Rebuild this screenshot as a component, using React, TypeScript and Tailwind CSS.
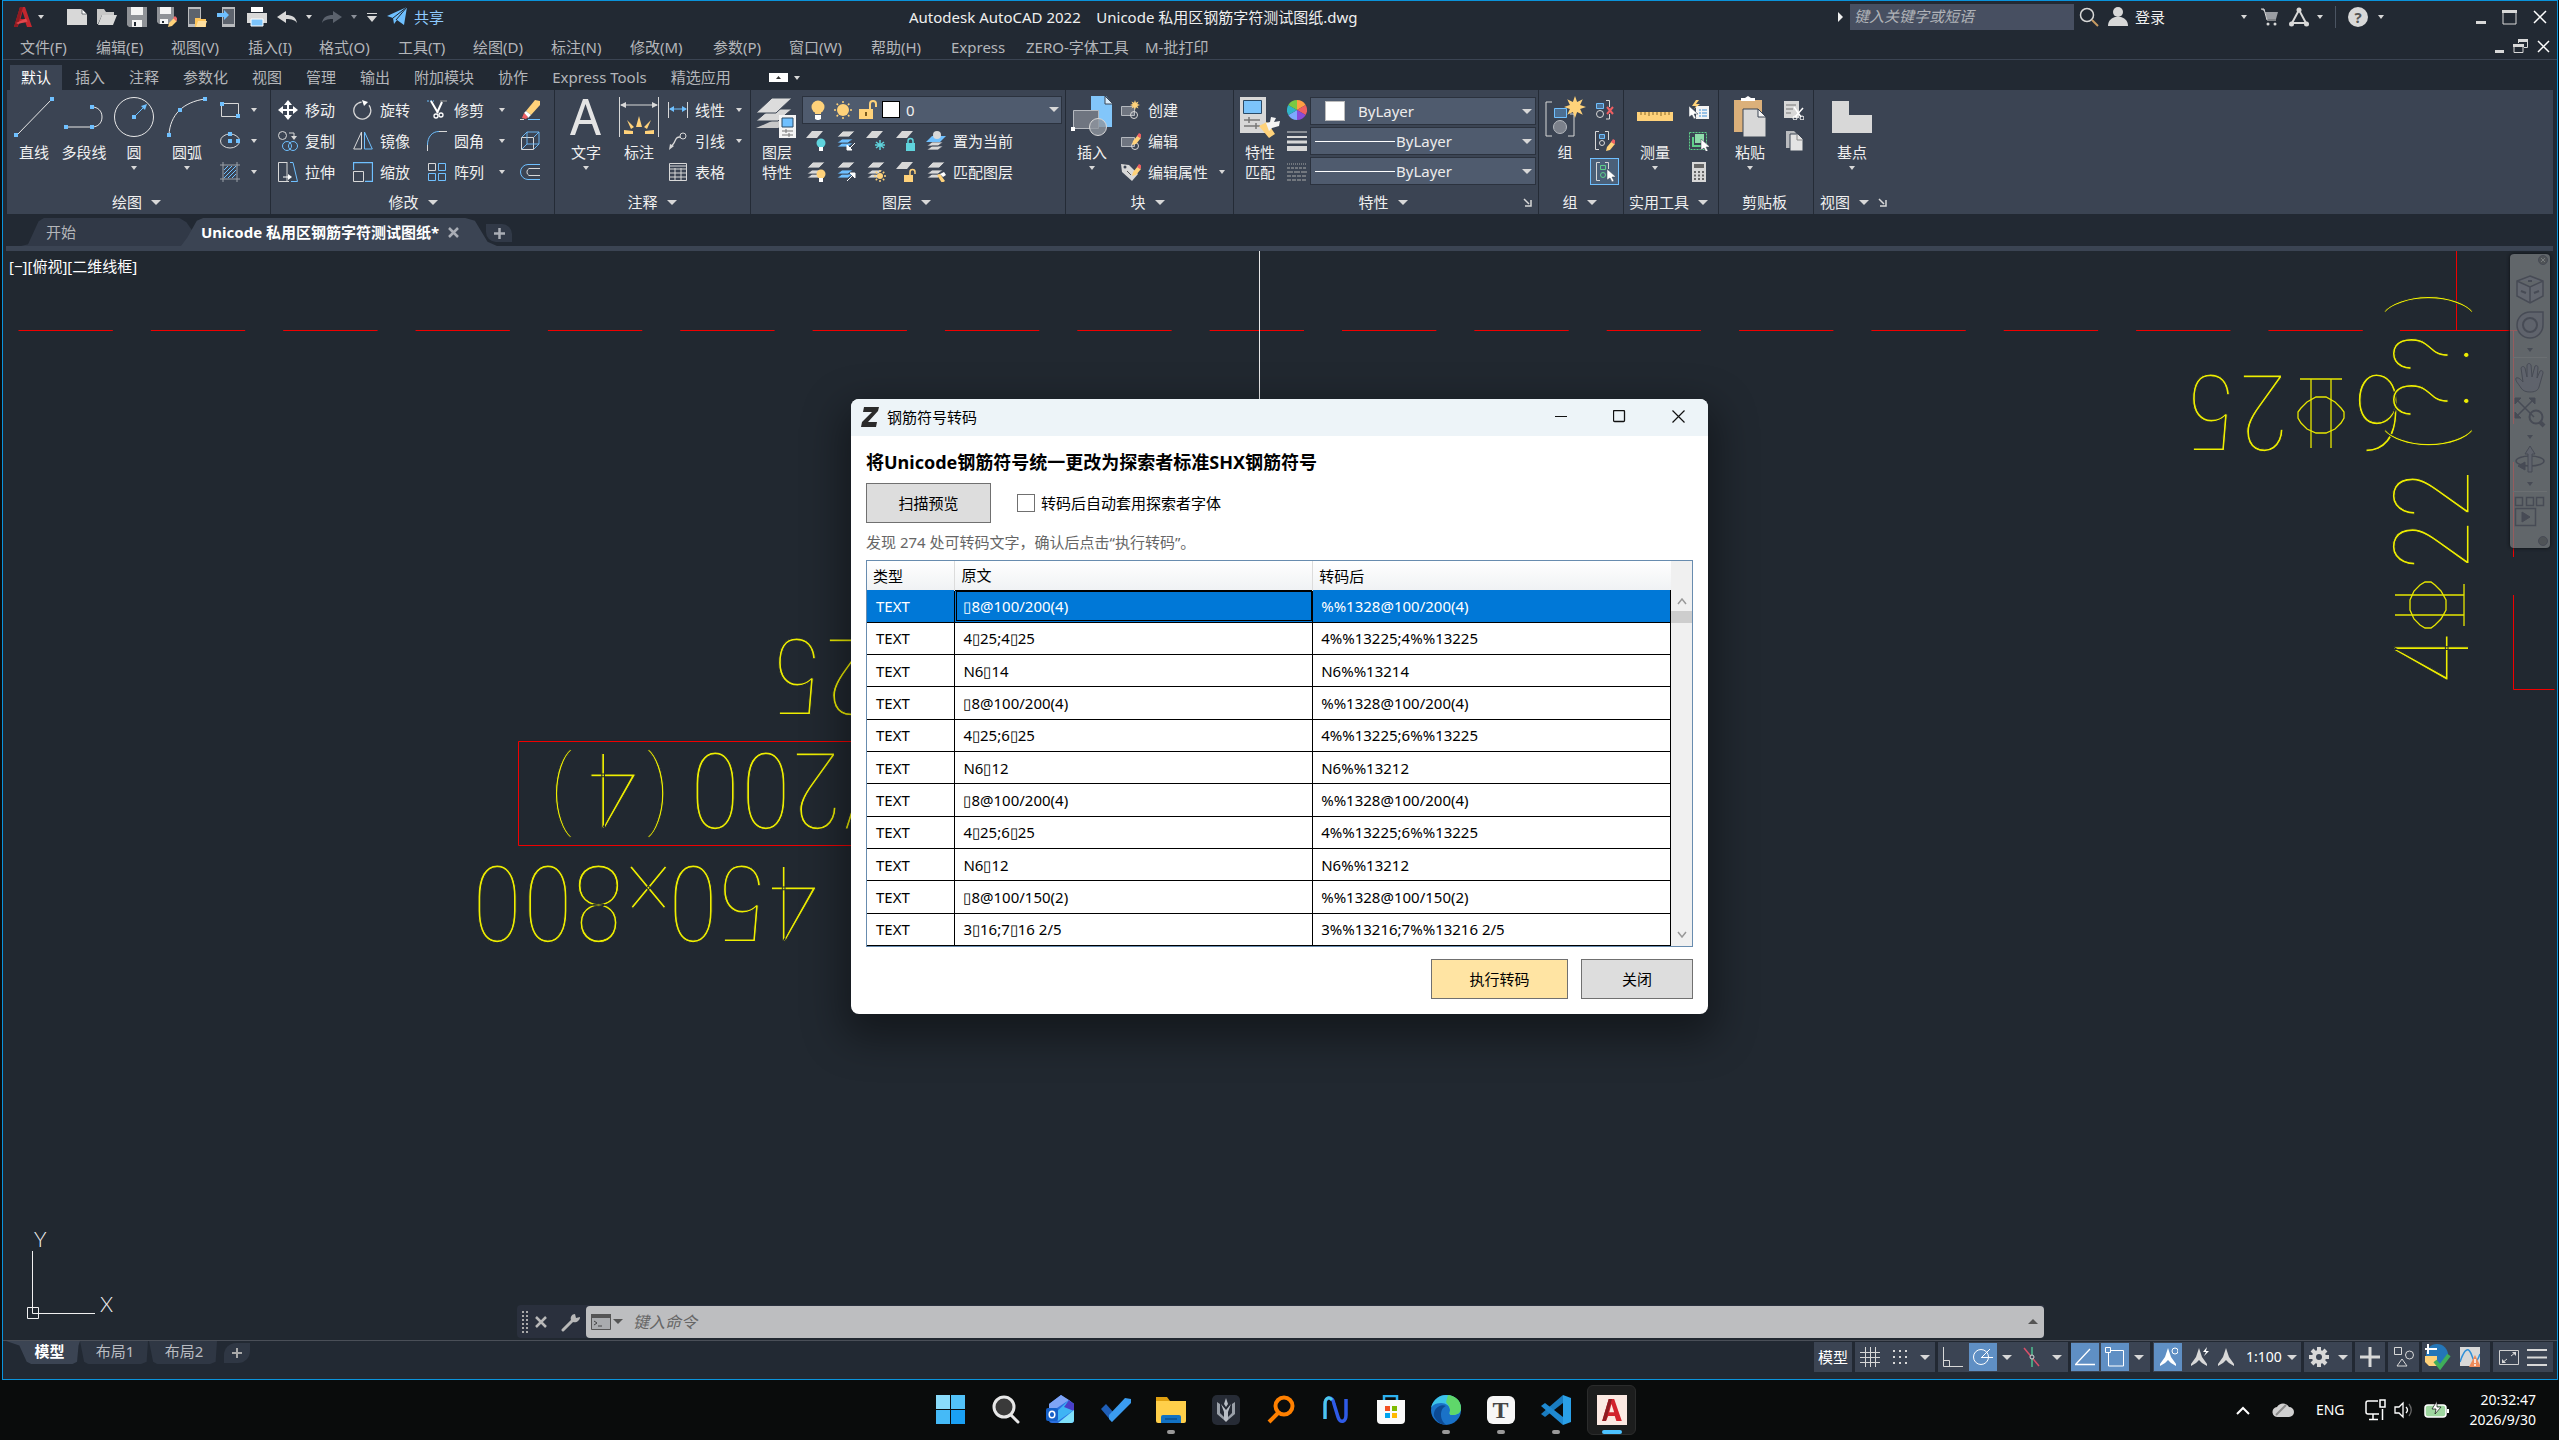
import React from "react";

type Kids = { children?: React.ReactNode };

const G = "#d8d8d8";
const B = "#6fc0ff";
const Y = "#ffd27a";

function Ic({ s = 20, w, h, vb, children, cls = "" }: Kids & { s?: number; w?: number; h?: number; vb?: string; cls?: string }) {
  const ww = w ?? s;
  const hh = h ?? s;
  return (
    <svg width={ww} height={hh} viewBox={vb ?? `0 0 ${ww} ${hh}`} fill="none" className={"shrink-0 " + cls} aria-hidden="true">
      {children}
    </svg>
  );
}

const Arr = ({ cls = "text-[#d8d8d8]" }: { cls?: string }) => (
  <Ic w={6} h={4} cls={cls}><path d="M0 0h6L3 4z" fill="currentColor" /></Ic>
);
const ArrL = ({ cls = "text-[#d8d8d8]" }: { cls?: string }) => (
  <Ic w={10} h={5} cls={cls}><path d="M0 0h10L5 5z" fill="currentColor" /></Ic>
);

const Dot = ({ x, y }: { x: number; y: number }) => <rect x={x - 2} y={y - 2} width="4" height="4" fill={B} />;

/* ---------- quick access icons ---------- */
const AcadLogo = ({ s = 20 }: { s?: number }) => (
  <Ic s={s} vb="0 0 20 22">
    <path d="M7 1h5l7 20h-5l-1.500-4.500H6.500L4.500 21H1z" fill="#c4262e" />
    <path d="M7 1h3L5 19l-.5 2H1z" fill="#8e1b21" />
    <path d="M9.500 5.500L7.500 13H12z" fill="#222933" />
    <path d="M3 17l10-4.500 1.500 3L5 18z" fill="#e2484d" />
  </Ic>
);
const quick = [
  <Ic><path d="M0 2h15l5 5v11H0z" fill={G} /><path d="M15 2l5 5h-5z" fill="#fff" stroke="#222933" strokeWidth=".6" /></Ic>,
  <Ic><path d="M0 2h7l2 3h8v3H5L1 17H0z" fill="#c8c8c8" /><path d="M5 8h15l-4 10H1z" fill={G} /></Ic>,
  <Ic><path d="M0 0h20v20H2l-2-2z" fill="#8f9297" /><path d="M4 0h12v8H4z" fill="#f4f4f4" /><path d="M5 13h10v7H5z" fill="#f4f4f4" /><path d="M7 15h2v4H7z" fill="#222933" /></Ic>,
  <Ic><path d="M0 0h17v17H2l-2-2z" fill="#8f9297" /><path d="M3 0h11v7H3z" fill="#f4f4f4" /><path d="M3 12h8v5H3z" fill="#f4f4f4" /><path d="M5 14h2v2H5z" fill="#222933" /><path d="M11 20l1-4 5-5 3 3-5 5z" fill={Y} /><path d="M16 11l2-2 3 3-2 2z" fill="#ef6b6b" /></Ic>,
  <Ic><path d="M1 0h13v20H1z" fill="#b9bbbe" /><path d="M2 2h11v15H2z" fill="#5d636d" /><path d="M8 11h5l1 1h5v8H8z" fill="#ffc65c" /><path d="M11 14h9l-2 6H9z" fill="#ffe0a0" /></Ic>,
  <Ic><path d="M5 0h13v20H5z" fill="#b9bbbe" /><path d="M6 2h11v15H6z" fill="#5d636d" /><path d="M0 6h7V3l5 5-5 5v-3H0z" fill={B} /></Ic>,
  <Ic><path d="M4 0h12v5H4z" fill="#fff" /><path d="M0 6h20v10H0z" fill={G} /><path d="M4 12h12v7H4z" fill="#7cc4fb" stroke="#fff" /></Ic>,
];

const Undo = ({ c }: { c: string }) => <Ic><path d="M0 10l9-6v4c6 0 10 2 11 8-2-3-5-4-11-4v4z" fill={c} /></Ic>;

/* ---------- ribbon ---------- */
const Stack = ({ mid = G, bottom = G, children }: Kids & { mid?: string; bottom?: string }) => (
  <Ic>
    <path d="M6 12h11l-5 4H1z" fill={bottom} stroke="#3b4453" strokeWidth=".8" />
    <path d="M6 8h11l-5 4H1z" fill={mid} stroke="#3b4453" strokeWidth=".8" />
    <path d="M7 0h12l-6 6H1z" fill={G} stroke="#3b4453" strokeWidth=".8" />
    {children}
  </Ic>
);
const One = ({ children }: Kids) => <Ic><path d="M6 0h11l-6 7H0z" fill={G} />{children}</Ic>;
const Bulb = ({ c }: { c: string }) => (<><circle cx="15" cy="12" r="4.500" fill={c} /><path d="M13 16h4v4h-4z" fill="#fff" /></>);
const Sun = ({ x, y, r }: { x: number; y: number; r: number }) => (
  <g stroke={Y} strokeWidth="1.500">
    <circle cx={x} cy={y} r={r} fill={Y} stroke="none" />
    {[0, 45, 90, 135, 180, 225, 270, 315].map((a) => (
      <path key={a} d={`M${x} ${y - r - 1}v-2`} transform={`rotate(${a} ${x} ${y})`} />
    ))}
  </g>
);
const Pencil = () => (<><path d="M11 14l1-4 5-6 3 3-5 6z" fill={Y} /><path d="M16 5l2-3 3 2-2 3z" fill="#ef5f62" /></>);
const Cursor = ({ x, y }: { x: number; y: number }) => <path d={`M${x} ${y}v11l3-2 2 4 2-1-2-4h4z`} fill="#fff" stroke="#3b4453" strokeWidth=".5" />;
const Burst = ({ x, y, r }: { x: number; y: number; r: number }) => {
  const pts = Array.from({ length: 16 }, (_, i) => {
    const rad = i % 2 ? r * 0.5 : r;
    const a = (i * Math.PI) / 8;
    return `${x + rad * Math.sin(a)},${y - rad * Math.cos(a)}`;
  }).join(" ");
  return <polygon points={pts} fill={Y} />;
};

function Big({ icon, label, label2, arrow, cls }: { icon: React.ReactNode; label: string; label2?: string; arrow?: boolean; cls: string }) {
  return (
    <button type="button" className={"flex shrink-0 flex-col items-center pt-[2px] leading-[20px] " + cls}>
      <span className="mb-[5px] flex h-[41px] items-center justify-center">{icon}</span>
      <span className="whitespace-nowrap">{label}</span>
      {label2 && <span className="whitespace-nowrap">{label2}</span>}
      {arrow && <span className="mt-[4px]"><Arr /></span>}
    </button>
  );
}
function Row({ icon, label, arrow, cls = "" }: { icon: React.ReactNode; label?: string; arrow?: boolean; cls?: string }) {
  return (
    <button type="button" className={"flex h-[31px] items-center whitespace-nowrap " + cls}>
      <span className="flex w-[20px] shrink-0 justify-center">{icon}</span>
      {label && <span className="ml-[7px]">{label}</span>}
      {arrow && <span className="ml-auto"><Arr /></span>}
    </button>
  );
}
function Panel({ title, cls, children, arrow = true, corner }: Kids & { title: string; cls: string; arrow?: boolean; corner?: boolean }) {
  return (
    <section className={"flex shrink-0 flex-col border-r border-[#242b36] " + cls} aria-label={title}>
      <div className="flex h-[101px] items-start pt-[4px]">{children}</div>
      <div className="flex h-[22px] items-center justify-center gap-[9px] pr-[6px]">
        {corner && <span className="mr-auto w-[6px]" />}
        <span>{title}</span>
        {arrow && <ArrL />}
        {corner && (
          <Ic w={9} h={9} cls="ml-auto"><path d="M1 1l5 5M8 2v6H2" stroke={G} strokeWidth="1.500" /></Ic>
        )}
      </div>
    </section>
  );
}

const I = {
  line: <Ic s={40}><path d="M3 38L38 2" stroke="#e8e8e8" /><Dot x={2} y={38} /><Dot x={38} y={2} /></Ic>,
  pline: <Ic s={40}><path d="M2 30h26c6 0 10-4 10-10s-4-10-10-10" stroke="#e8e8e8" /><Dot x={2} y={30} /><Dot x={28} y={30} /><Dot x={28} y={10} /></Ic>,
  circle: <Ic s={40}><circle cx="20" cy="20" r="19.500" stroke="#e8e8e8" /><path d="M20 20L31 9" stroke={B} /><path d="M33 7l-6 2 4 4z" fill={B} /><Dot x={20} y={20} /></Ic>,
  arc: <Ic s={40}><path d="M2 38C3 18 16 5 38 2" stroke="#e8e8e8" /><Dot x={2} y={38} /><Dot x={13} y={13} /><Dot x={38} y={2} /></Ic>,
  rect: <Ic><path d="M1.500 3.500h17v13h-17z" stroke={G} /><Dot x={2} y={4} /><Dot x={18} y={16} /></Ic>,
  ellipse: <Ic><ellipse cx="10" cy="10" rx="9.500" ry="7" stroke={G} /><Dot x={10} y={3} /><Dot x={10} y={10} /><Dot x={18} y={10} /></Ic>,
  hatch: <Ic><path d="M0 3h20M0 17h20M3 0v20M17 0v20" stroke="#9aa0a8" /><path d="M4 8l4-4M4 12l8-8M4 16L16 4M8 16l8-8M12 16l4-4" stroke={B} /></Ic>,
  move: <Ic><path d="M10 0l4 5h-3v4h4V6l5 4-5 4v-3h-4v4h3l-4 5-4-5h3v-4H5v3l-5-4 5-4v3h4V5H6z" fill="#fff" /></Ic>,
  rotate: <Ic><path d="M14 3.500A8.500 8.500 0 1 1 6 3" stroke={G} strokeWidth="1.300" transform="rotate(20 10 10)" /><path d="M9 0l6 2-4 4z" fill="#fff" /></Ic>,
  trim: <Ic><path d="M0 1h7" stroke={B} strokeDasharray="2 1" /><path d="M13 1h7" stroke="#999" /><path d="M4 1l7 12M15 2L10 13" stroke="#fff" strokeWidth="2" /><circle cx="9" cy="16" r="2" stroke="#fff" strokeWidth="1.300" /><circle cx="14" cy="15" r="2" stroke="#fff" strokeWidth="1.300" /></Ic>,
  copy: <Ic><circle cx="4.500" cy="4.500" r="4" stroke={G} /><path d="M11 2h5v4" stroke={G} /><path d="M13 5h6l-3 4z" fill={G} /><circle cx="9" cy="15" r="4.500" stroke={B} /><circle cx="15" cy="15" r="4.500" stroke={B} /></Ic>,
  mirror: <Ic><path d="M8.500 1v17H.700z" stroke={G} /><path d="M11.500 1v17h7.800z" stroke={B} /></Ic>,
  fillet: <Ic><path d="M.500 20V14" stroke={G} /><path d="M.500 14C.500 6 5 .500 12 .500" stroke={B} /><path d="M12 .500h8" stroke={G} /></Ic>,
  stretch: <Ic><path d="M9 .500H.500v19H11" stroke={G} /><path d="M9 0v20" stroke={G} /><path d="M12 .500h3l4.500 19H13" stroke={B} /><path d="M5 15h6" stroke="#fff" /><path d="M10 12l4 3-4 3z" fill="#fff" /></Ic>,
  scale: <Ic><path d="M.500 8V.500h19v19H12" stroke={B} strokeWidth="1.300" /><path d="M.500 9.500h10v10H.500z" stroke={G} /></Ic>,
  array: <Ic><path d="M1.500 1.500h7v7h-7z" stroke={G} /><path d="M11.500 1.500h7v7h-7zM1.500 11.500h7v7h-7zM11.500 11.500h7v7h-7z" stroke={B} /></Ic>,
  erase: <Ic><path d="M6 11L15 0l5 1v4L11 15z" fill={Y} /><path d="M4 13l2-2 5 4-3 3z" fill="#fff" /><path d="M2 18l2-5 4 4-2 2z" fill="#ef5f62" /><path d="M0 19.500h4" stroke={G} /><path d="M8 19.500h12" stroke={B} /></Ic>,
  solid: <Ic><path d="M1.500 6.500h12v12h-12z" stroke={G} /><path d="M2 6l5-5h12v12l-5 5M14 6l5-5M7 1v12h12M2 18l5-5" stroke={B} strokeWidth=".9" /></Ic>,
  offset: <Ic><path d="M20 2.500H8a7 7 0 0 0 0 15h12" stroke={B} /><path d="M20 6.500H9a4 4 0 0 0 0 7h11" stroke={G} /></Ic>,
  text: <Ic w={34} h={38}><path d="M14 1h5l13 36h-5l-4-11H10L6 37H1zM16.500 6L11 22h11z" fill="#e4e4e4" fillRule="evenodd" /></Ic>,
  dim: <Ic s={40}><path d="M.500 0v40M39.500 0v40M2 8h36" stroke={G} /><path d="M1 8l6-3v6zM39 8l-6-3v6z" fill={G} /><path d="M20 19l3 11h-6zM8 23l7 7-3 2zM32 23l-7 7 3 2zM5 33l9 1v3H5zM35 33l-9 1v3h9z" fill={Y} /></Ic>,
  lin: <Ic><path d="M.500 2v16M19.500 2v16" stroke={G} /><path d="M2 9h16" stroke={B} /><path d="M1 9l5-3v6zM19 9l-5-3v6z" fill={B} /></Ic>,
  leader: <Ic><circle cx="15" cy="5" r="3" stroke={G} /><path d="M12 6c-4 0-4 2-6 6l-3 4" stroke={G} strokeWidth="1.300" /><path d="M1 19l1-6 4 2z" fill={G} /></Ic>,
  table: <Ic><path d="M1.500 1.500h17v17h-17zM1 7h18M1 11h18M1 15h18M7 6v12M13 6v12" stroke={G} /><path d="M2 3h16v2H2z" fill="#8b9099" /></Ic>,
  layers: <Ic s={42}><path d="M16 25h20L22 32H0z" fill="#c9c9c9" /><path d="M14 13h22L22 25H0z" fill={G} stroke="#3b4453" /><path d="M16 2h20L20 17H0z" fill="#dcdcdc" stroke="#3b4453" /><path d="M23 19h17v23H23z" fill="#f4f4f4" /><path d="M26 22h11v9H26z" fill={B} stroke="#2a4a66" /><path d="M26 35h11M26 39h11M30 33v4M33 37v4" stroke="#777" /></Ic>,
  insert: <Ic s={42}><path d="M20 0h15l6 7v24H20z" fill="#82c6fa" /><path d="M34 0v8h8z" fill="#d8ecfb" stroke="#3b4453" /><path d="M2.500 14.500h25v18h-25z" fill="#6f7580" stroke="#b4b8be" /><circle cx="27" cy="31" r="8.500" fill="#8f959ecc" stroke={G} /><path d="M0 31h4v4H0z" fill="#fff" /></Ic>,
  matchp: <Ic s={42}><path d="M1 1h26v36H1z" fill={G} /><path d="M4.500 4.500h18v13h-18z" fill="#7cc4fb" stroke="#2a4a66" /><path d="M5 24h16M5 30h16M10 21v6M17 27v6" stroke="#777" strokeWidth="1.500" /><path d="M20 30l8-4 8 12-6 4z" fill={Y} /><path d="M27 27l4-1 1-5 5 1-2 4 6-1-1 5-7 2-3 3z" fill="#f4f4f4" /></Ic>,
  group: <Ic s={42}><path d="M8 6H2v34h6M26 18h4v22h-6" stroke={G} /><path d="M10.500 12.500h12v9h-12z" fill="#4c6f92" stroke={B} /><circle cx="16" cy="31" r="6.500" fill="#7c818b" stroke="#b4b8be" /><Burst x={31} y={11} r={11} /></Ic>,
  ruler: <Ic w={36} h={9}><path d="M0 0h36v9H0z" fill={Y} /><path d="M4 0v3M8 0v3M12 0v4M16 0v3M20 0v3M24 0v4M28 0v3M32 0v3" stroke="#8a6a2a" /></Ic>,
  paste: <Ic w={34} h={42}><path d="M1 4h28v32H1z" fill="#dbb07a" /><path d="M8 5V2h4l3-2 3 2h4v3z" fill="#fff" /><path d="M10 13h15l8 8v20H10z" fill={G} stroke="#3b4453" /><path d="M25 13v8h8z" fill="#f4f4f4" stroke="#3b4453" /></Ic>,
  base: <Ic w={40} h={32}><path d="M0 0h17v14h23v18H0z" fill={G} /></Ic>,
};

function Combo({ id, label, lineOnly }: { id: string; label: string; lineOnly?: boolean }) {
  return (
    <div className="flex h-[28px] w-[226px] items-center border border-[#2b323e] bg-[#4f5b6e]">
      {lineOnly ? <span className="ml-[4px] h-px w-[80px] bg-white" /> : <span className="mr-[12px] ml-[14px] h-[20px] w-[20px] border border-[#bbb] bg-white" />}
      <select id={id} aria-label={label} className="h-full min-w-0 flex-1 appearance-none bg-transparent pl-[1px] text-[#ececec]">
        <option>ByLayer</option>
      </select>
      <span className="mr-[3px]"><ArrL /></span>
    </div>
  );
}

function Ribbon() {
  return (
    <div className="mx-[4px] flex h-[124px] overflow-hidden bg-[#3b4453] text-[#f0f0f0]">
      <Panel title="绘图" cls="w-[264px] pl-[2px]">
        <Big cls="w-[50px]" icon={I.line} label="直线" />
        <Big cls="w-[50px]" icon={I.pline} label="多段线" />
        <Big cls="w-[50px]" icon={I.circle} label="圆" arrow />
        <Big cls="w-[56px]" icon={I.arc} label="圆弧" arrow />
        <div className="ml-[5px] flex w-[37px] flex-col">
          <Row icon={I.rect} arrow /><Row icon={I.ellipse} arrow /><Row icon={I.hatch} arrow />
        </div>
      </Panel>
      <Panel title="修改" cls="w-[284px] pl-[7px]">
        <div className="w-[75px]"><Row icon={I.move} label="移动" /><Row icon={I.copy} label="复制" /><Row icon={I.stretch} label="拉伸" /></div>
        <div className="w-[74px]"><Row icon={I.rotate} label="旋转" /><Row icon={I.mirror} label="镜像" /><Row icon={I.scale} label="缩放" /></div>
        <div className="mr-[15px] w-[78px]"><Row cls="w-full" icon={I.trim} label="修剪" arrow /><Row cls="w-full" icon={I.fillet} label="圆角" arrow /><Row cls="w-full" icon={I.array} label="阵列" arrow /></div>
        <div><Row icon={I.erase} /><Row icon={I.solid} /><Row icon={I.offset} /></div>
      </Panel>
      <Panel title="注释" cls="w-[196px] pl-[5px]">
        <Big cls="w-[52px]" icon={I.text} label="文字" arrow />
        <Big cls="w-[54px]" icon={I.dim} label="标注" />
        <div className="ml-[2px] w-[74px]"><Row cls="w-full" icon={I.lin} label="线性" arrow /><Row cls="w-full" icon={I.leader} label="引线" arrow /><Row icon={I.table} label="表格" /></div>
      </Panel>
      <Panel title="图层" cls="w-[315px] pl-[3px]">
        <Big cls="w-[46px]" icon={I.layers} label="图层" label2="特性" />
        <div className="ml-[2px]">
          <div className="flex h-[31px] items-center">
            <button type="button" aria-haspopup="listbox" className="flex h-[28px] w-[260px] items-center border border-[#2b323e] bg-[#4f5b6e] pr-[2px] pl-[6px]">
              <Ic><circle cx="9" cy="7" r="6.500" fill={Y} /><path d="M6 11h6v3H6z" fill={Y} /><path d="M6 15h6v4l-2 1H8l-2-1z" fill="#fff" /></Ic>
              <Ic s={22} cls="ml-[3px]"><Sun x={11} y={11} r={6} /></Ic>
              <Ic cls="ml-[4px]"><path d="M1 9h14v10H1z" fill={Y} /><path d="M12 9V4a3 3 0 0 1 6 0v3" stroke={Y} strokeWidth="2" /><path d="M8 12v4" stroke="#7a5a1e" strokeWidth="2" /></Ic>
              <span className="ml-[4px] h-[17px] w-[18px] border border-black bg-white" />
              <span className="ml-[6px]">0</span>
              <span className="ml-auto"><ArrL /></span>
            </button>
          </div>
          <div className="flex gap-[10px] pl-[4px]">
            <Row icon={<One><Bulb c="#5fd3dc" /></One>} />
            <Row icon={<Stack mid={B} bottom={B}><path d="M19 12l-6 6M11 19v-5l5 5z" stroke="#fff" fill="#fff" /></Stack>} />
            <Row icon={<One><path d="M14 9v10M10 11l8 6M18 11l-8 6M9 14h10" stroke="#5fd3dc" strokeWidth="1.500" /></One>} />
            <Row icon={<One><path d="M10 12h9v8h-9z" fill="#5fd3dc" /><path d="M12 12v-2a2.500 2.500 0 0 1 5 0v2" stroke="#5fd3dc" strokeWidth="1.500" /></One>} />
            <Row icon={<Ic><path d="M6 15h11l-5 4H1zM6 11h11l-5 4H1z" fill={G} stroke="#3b4453" strokeWidth=".7" /><path d="M6 5h14l-6 6H0z" fill={B} /><circle cx="11" cy="4" r="4" fill={G} /></Ic>} label="置为当前" />
          </div>
          <div className="flex gap-[10px] pl-[4px]">
            <Row icon={<Stack><Bulb c={Y} /></Stack>} />
            <Row icon={<Stack mid={B} bottom={B}><path d="M11 19l6-6M19 11v5l-5-5z" stroke="#fff" fill="#fff" /></Stack>} />
            <Row icon={<Stack><Sun x={14} y={14} r={3} /></Stack>} />
            <Row icon={<One><path d="M8 13h9v7H8z" fill={Y} /><path d="M14 13v-3a2.500 2.500 0 0 1 5 0v2" stroke={Y} strokeWidth="1.500" /></One>} />
            <Row icon={<Stack><path d="M11 13l3-1 5 7-3 2z" fill={Y} /><path d="M14 12l4-2 2 3-3 2z" fill="#fff" /></Stack>} label="匹配图层" />
          </div>
        </div>
      </Panel>
      <Panel title="块" cls="w-[168px] pl-[2px]">
        <Big cls="w-[48px]" icon={I.insert} label="插入" arrow />
        <div className="ml-[5px] w-[104px]">
          <Row icon={<Ic><path d="M.500 6.500h13v9H.500z" fill="#6f7580" stroke="#b4b8be" /><circle cx="13" cy="15" r="3.500" stroke={G} /><Burst x={14} y={5} r={5} /></Ic>} label="创建" />
          <Row icon={<Ic><path d="M.500 6.500h13v9H.500z" fill="#6f7580" stroke="#b4b8be" /><circle cx="14" cy="15" r="3.500" stroke={G} /><Pencil /></Ic>} label="编辑" />
          <Row cls="w-full" icon={<Ic><path d="M0 2l8 1 9 9-6 7L1 10z" fill={G} /><circle cx="4" cy="5" r="1.500" fill="#3b4453" /><path d="M6 9l4 4" stroke="#555" /><Pencil /></Ic>} label="编辑属性" arrow />
        </div>
      </Panel>
      <Panel title="特性" cls="w-[305px] pl-[3px]" corner>
        <Big cls="w-[46px]" icon={I.matchp} label="特性" label2="匹配" />
        <div className="ml-[4px]">
          <Row icon={<Ic vb="-10 -10 20 20">{["#ff9f43", "#ef5f62", "#8a4bd8", "#7da9ff", "#30b5c9", "#7ac943"].map((c, i) => (<path key={c} d="M0 0L0-10A10 10 0 0 1 8.660-5z" fill={c} transform={`rotate(${i * 60})`} />))}</Ic>} />
          <Row icon={<Ic><path d="M0 1h20" stroke={G} /><path d="M0 6h20" stroke={G} strokeWidth="2" /><path d="M0 11h20" stroke={G} strokeWidth="3" /><path d="M0 17.500h20" stroke={G} strokeWidth="5" /></Ic>} />
          <Row icon={<Ic><path d="M0 2h20" stroke="#aaa" strokeDasharray="1 1" /><path d="M0 6h20" stroke="#aaa" strokeDasharray="3 1" /><path d="M0 10h20" stroke="#aaa" strokeDasharray="6 1" /><path d="M0 14h20M0 18h20" stroke="#aaa" strokeDasharray="4 1" /></Ic>} />
        </div>
        <div className="mt-[3px] ml-[3px] flex flex-col gap-[2px]">
          <Combo id="color" label="对象颜色" /><Combo id="lw" label="线宽" lineOnly /><Combo id="lt" label="线型" lineOnly />
        </div>
      </Panel>
      <Panel title="组" cls="w-[85px] pl-[3px]">
        <Big cls="w-[46px]" icon={I.group} label="组" />
        <div className="ml-[2px] flex flex-col items-center">
          <Row icon={<Ic><path d="M1.500 3.500h7v5h-7z" fill="#4c6f92" stroke={B} /><circle cx="5" cy="14" r="3.500" stroke={G} /><path d="M11 .500h3.500V7M14.500 14v5H11" stroke={G} /><path d="M12 7l6 7M18 7l-6 7" stroke="#ef5f62" strokeWidth="2" /></Ic>} />
          <Row icon={<Ic><path d="M4 .500H.500v18H4M10 .500h3.500V9" stroke={G} /><path d="M4.500 3.500h5v4h-5z" fill="#4c6f92" stroke={B} /><circle cx="7" cy="12" r="2.500" stroke={G} /><g transform="translate(0 6)"><Pencil /></g></Ic>} />
          <button type="button" aria-label="组选择" aria-pressed="true" className="mt-[2px] flex h-[27px] w-[29px] items-center justify-center border border-[#6fc0ff] bg-[#4a6079]">
            <Ic><path d="M5 .500H1.500v18H5M10 .500h3.500V7" stroke={G} /><path d="M5.500 3.500h5v4h-5z" stroke="#5fd08a" /><circle cx="8" cy="13" r="2.500" stroke="#5fd08a" /><Cursor x={12} y={7} /></Ic>
          </button>
        </div>
      </Panel>
      <Panel title="实用工具" cls="w-[95px] pl-[1px]">
        <Big cls="w-[60px]" icon={I.ruler} label="测量" arrow />
        <div className="ml-[4px]">
          <Row icon={<Ic><path d="M7 6h13v13H7z" fill="#f4f4f4" /><path d="M10 10h2M10 13h2M10 16h2M13 10h5M13 13h5M13 16h5" stroke="#3b8fd8" /><path d="M7 0l-4 6h4l-2 3 6-5H7l3-4z" fill={Y} /><Cursor x={0} y={6} /></Ic>} />
          <Row icon={<Ic><path d="M.500 1.500h17v17h-17z" stroke="#5fd08a" strokeDasharray="2 1" /><path d="M6 3h9v9H6z" fill="#8fdcab" /><path d="M3 6h2v8h9v2H3z" fill="#5fd08a" /><Cursor x={12} y={8} /></Ic>} />
          <Row icon={<Ic><path d="M3 0h14v20H3z" fill={G} /><path d="M5 2h10v4H5z" fill="#666" /><path d="M5 9h2v2H5zM9 9h2v2H9zM13 9h2v2h-2zM5 12.500h2v2H5zM9 12.500h2v2H9zM13 12.500h2v2h-2zM5 16h2v2H5zM9 16h2v2H9zM13 16h2v2h-2z" fill="#666" /></Ic>} />
        </div>
      </Panel>
      <Panel title="剪贴板" cls="w-[95px] pl-[3px]" arrow={false}>
        <Big cls="w-[56px]" icon={I.paste} label="粘贴" arrow />
        <div className="ml-[6px]">
          <Row icon={<Ic><path d="M0 1h15v17H0z" fill={G} /><path d="M2 5h10M2 9h7M2 13h5" stroke="#777" /><path d="M10 7l7 10M19 8l-8 9" stroke="#fff" strokeWidth="1.500" /><circle cx="11" cy="18" r="2" stroke="#fff" /><circle cx="18" cy="18" r="2" stroke="#fff" /></Ic>} />
          <Row icon={<Ic><path d="M2 0h8l3 3v14H2z" fill="#b9bbbe" /><path d="M6 3h8l5 5v12H6z" fill="#e4e4e4" stroke="#3b4453" /><path d="M13 4v5h5" stroke="#888" /></Ic>} />
        </div>
      </Panel>
      <section aria-label="视图" className="flex flex-col">
        <div className="flex h-[101px] pt-[4px] pl-[8px]"><Big cls="w-[60px]" icon={I.base} label="基点" arrow /></div>
        <div className="flex h-[22px] items-center gap-[9px] pl-[6px]">
          <span>视图</span><ArrL />
          <Ic w={9} h={9}><path d="M1 1l5 5M8 2v6H2" stroke={G} strokeWidth="1.500" /></Ic>
        </div>
      </section>
    </div>
  );
}

/* ---------- header ---------- */
function WinBtn({ label, children }: Kids & { label: string }) {
  return <button type="button" aria-label={label} className="flex items-center justify-center">{children}</button>;
}

function TitleBar() {
  return (
    <header className="flex h-[35px] items-center pb-[3px] text-[#f0f0f0]">
      <div className="flex w-[906px] shrink-0 items-center pl-[9px]">
        <AcadLogo s={22} />
        <span className="ml-[4px]"><Arr /></span>
        <div className="ml-[23px] flex gap-[10px]">
          {quick.map((q, i) => <button key={i} type="button" aria-label={"快速访问 " + (i + 1)}>{q}</button>)}
        </div>
        <button type="button" aria-label="放弃" className="ml-[10px]"><Undo c={G} /></button>
        <span className="ml-[9px]"><Arr /></span>
        <button type="button" aria-label="重做" className="ml-[10px] -scale-x-100"><Undo c="#5b626d" /></button>
        <span className="ml-[9px]"><Arr cls="text-[#8b9099]" /></span>
        <Ic w={10} h={9} cls="ml-[10px]"><path d="M0 .500h10" stroke={G} /><path d="M0 3h10L5 9z" fill={G} /></Ic>
        <button type="button" className="ml-[10px] flex items-center gap-[7px] text-[#8fcbff]">
          <Ic><path d="M0 9L20 0l-3 18-7-5-3 4-1-6z" fill={B} /><path d="M6 11L20 0 9 13" stroke="#222933" /></Ic>
          共享
        </button>
      </div>
      <h1 className="flex-1 whitespace-pre">Autodesk AutoCAD 2022    Unicode 私用区钢筋字符测试图纸.dwg</h1>
      <div className="flex h-full items-center">
        <Ic w={5} h={10} cls="mr-[7px]"><path d="M0 0l5 5-5 5z" fill="#f0f0f0" /></Ic>
        <input aria-label="搜索" placeholder="键入关键字或短语" className="h-[26px] w-[224px] bg-[#474f61] px-[4px] pb-[2px] italic placeholder:text-[#b0b3b8]" />
        <Ic cls="ml-[5px]"><circle cx="8" cy="8" r="6.500" stroke={G} strokeWidth="1.500" /><path d="M13 13l6 6" stroke="#c79a63" strokeWidth="2" /></Ic>
        <button type="button" className="ml-[9px] flex items-center gap-[7px]">
          <Ic><circle cx="10" cy="5" r="5" fill={G} /><path d="M0 19c0-6 4-8 7-9h6c3 1 7 3 7 9z" fill={G} /></Ic>
          登录
        </button>
        <span className="ml-[76px]"><Arr /></span>
        <Ic cls="ml-[14px]"><path d="M0 2h3l3 10h9l2-7H4z" fill="#9a9da3" /><path d="M0 2h3l3 11h9" stroke={G} /><circle cx="7" cy="17" r="1.500" fill={G} /><circle cx="14" cy="17" r="1.500" fill={G} /></Ic>
        <Ic cls="ml-[8px]"><path d="M10 3L3 16h14z" stroke={G} strokeWidth="2" /><circle cx="10" cy="3" r="2.500" fill={G} /><circle cx="2.500" cy="17" r="2.500" fill={G} /><circle cx="17.500" cy="17" r="2.500" fill={G} /></Ic>
        <span className="ml-[8px]"><Arr /></span>
        <span className="mx-[12px] h-[22px] w-px bg-[#4b5462]" />
        <button type="button" aria-label="帮助" className="flex h-[20px] w-[20px] items-center justify-center rounded-full bg-[#d8d8d8] font-bold text-[#555]">?</button>
        <span className="ml-[10px]"><Arr /></span>
        <div className="mr-[10px] ml-[92px] flex items-center gap-[16px]">
          <WinBtn label="最小化"><Ic w={10} h={14}><path d="M0 11h10v3H0z" fill={G} /></Ic></WinBtn>
          <WinBtn label="最大化"><Ic w={15} h={15}><path d="M1 1h13v13H1z" stroke={G} /><path d="M0 0h15v3H0z" fill={G} /></Ic></WinBtn>
          <WinBtn label="关闭程序"><Ic w={14} h={14}><path d="M1 1l12 12M13 1L1 13" stroke="#fff" strokeWidth="1.500" /></Ic></WinBtn>
        </div>
      </div>
    </header>
  );
}

const menus: [string, string][] = [
  ["文件(F)", "w-[76px]"], ["编辑(E)", "w-[75px]"], ["视图(V)", "w-[77px]"], ["插入(I)", "w-[71px]"], ["格式(O)", "w-[79px]"],
  ["工具(T)", "w-[75px]"], ["绘图(D)", "w-[78px]"], ["标注(N)", "w-[79px]"], ["修改(M)", "w-[83px]"], ["参数(P)", "w-[76px]"],
  ["窗口(W)", "w-[82px]"], ["帮助(H)", "w-[80px]"], ["Express", "w-[75px]"], ["ZERO-字体工具", "w-[119px]"], ["M-批打印", "w-[90px]"],
];
const tabs = ["插入", "注释", "参数化", "视图", "管理", "输出", "附加模块", "协作", "Express Tools", "精选应用"];

/* ---------- drawing area ---------- */
const cad = "font-['Roboto_Condensed','Roboto','Lato',sans-serif] font-thin";
function Rebar({ t }: { t: string }) {
  return (
    <g transform={t} stroke="#e6e600" strokeWidth="1.300" fill="none">
      <path d="M-10-36V33M10-36V33M-21-36H21" />
      <path d="M-5-18H5L14-13L20-7L23-3V3L20 8L14 14L5 18H-5L-14 14L-20 8L-23 3V-3L-20-7L-14-13z" />
    </g>
  );
}
type Mark = { t: string; x: number; y: number; a: number; mid?: boolean; small?: boolean };
const marks: Mark[] = [
  { t: "450", x: 820, y: 866, a: 180 },
  { t: "×", x: 648, y: 866, a: 180, mid: true },
  { t: "800", x: 624, y: 866, a: 180 },
  { t: "/", x: 877, y: 753, a: 180 },
  { t: "200", x: 842, y: 753, a: 180 },
  { t: "(", x: 658, y: 769, a: 180, mid: true, small: true },
  { t: "4", x: 614, y: 753, a: 180, mid: true },
  { t: ")", x: 561, y: 769, a: 180, mid: true, small: true },
  { t: "25", x: 875, y: 639, a: 180 },
  { t: "6", x: 2378, y: 375, a: 180, mid: true },
  { t: "25", x: 2289, y: 375, a: 180 },
  { t: "4", x: 2469, y: 659, a: -90, mid: true },
  { t: "22", x: 2469, y: 571, a: -90 },
  { t: "(", x: 2453, y: 440, a: -90, mid: true, small: true },
  { t: "?", x: 2469, y: 400, a: -90, mid: true },
  { t: "?", x: 2469, y: 354, a: -90, mid: true },
  { t: ")", x: 2453, y: 302, a: -90, mid: true, small: true },
];
function Drawing() {
  return (
    <svg className="absolute inset-0 h-full w-full" viewBox="3 251 2554 1089" preserveAspectRatio="xMinYMin slice" aria-label="图纸">
      <g stroke="#f00000" fill="none">
        <path d="M18.500 330.500H2393" strokeDasharray="94.350 38" />
        <path d="M2400 330.500h141M2456.500 251v79M2513.500 330v94M2513.500 462v95M2513.500 595v94.500h41" />
        <path d="M900 741.500H518.500v104H900" />
      </g>
      <path d="M1259.500 251v200" stroke="#e8e8e8" />
      <g stroke="#f0f0f0" fill="none">
        <path d="M32.500 1251v62.500H95M27.500 1307.500h11v11h-11z" />
      </g>
      <g fill="#f0f0f0" fontSize="21" className="font-['Lato',sans-serif] font-light">
        <text x="34" y="1247">Y</text>
        <text x="100" y="1312">X</text>
      </g>
      <g fill="#eeee00" stroke="#212830" className={cad}>
        {marks.map((m, i) => (
          <text key={i} transform={`translate(${m.x} ${m.y}) rotate(${m.a})`} textAnchor={m.mid ? "middle" : "start"} fontSize={m.small ? 88 : 105}>{m.t}</text>
        ))}
      </g>
      <Rebar t="translate(2321 415)" />
      <Rebar t="translate(2428 605) rotate(90)" />
    </svg>
  );
}

function NavBar() {
  const c = "#474b55";
  return (
    <nav aria-label="导航栏" className="absolute top-[3px] right-[7px] flex h-[294px] w-[40px] flex-col items-center rounded bg-[#777b7dbf] shadow-[0_0_3px_1px_#14181d]">
      <Ic w={40} h={294}>
        <g stroke={c}>
          <circle cx="33" cy="6" r="4.500" fill="#4f5357" /><path d="M31 4l4 4M35 4l-4 4" stroke="#777b7d" />
          <path d="M20 22l13 5v15l-13 7-13-7V27zM7 27l13 6 13-6M20 33v16" fill="#62666f" strokeWidth="1.500" /><path d="M11 37l5 2M24 39l5-2M18 27h4" strokeWidth="2" />
          <path d="M20 58h13v13a13 13 0 1 1-13-13z" strokeWidth="1.500" fill="#5f636c" /><circle cx="20" cy="71" r="7" strokeWidth="2" />
          <path d="M3 103.500h34M3 237.500h34" stroke="#6b6f72" />
          <path d="M11 134c-3-5-6-7-5-10 3-1 5 2 7 4l-2-14c1-2 3-2 4 0l2 9V111c1-2 3-2 4 0l1 12 3-11c2-1 3 0 3 2l-1 10 3-7c2-1 3 0 3 2l-4 14c-1 4-5 5-9 5s-7-1-9-4z" fill="#5f636c" />
          <path d="M6 145l18 18M24 145L6 163" strokeWidth="1.500" /><path d="M5 144h6l-6 6zM25 144v6l-6-6zM5 164v-6l6 6z" fill={c} /><circle cx="26" cy="163" r="6.500" strokeWidth="2" /><path d="M30 168l4 4" strokeWidth="4" />
          <ellipse cx="20" cy="207" rx="14" ry="5" strokeWidth="1.500" /><path d="M18 218v-18h-3l5-8 5 8h-3v18z" fill="#5f636c" /><path d="M8 212l7-4v8z" fill={c} />
          <path d="M5.500 243.500h7v8h-7zM16.500 243.500h7v8h-7zM26.500 243.500h7v8h-7zM5.500 254.500h20v17h-20z" strokeWidth="1.500" /><path d="M12 258v10l8-5z" fill={c} />
          <circle cx="33" cy="287" r="4.500" fill="#4f5357" />
        </g>
        <path d="M17 94h6l-3 4zM17 181h6l-3 4zM17 228h6l-3 4z" fill={c} />
      </Ic>
    </nav>
  );
}

function CommandLine() {
  return (
    <div className="absolute bottom-[2px] left-[514px] flex h-[33px] w-[1527px] items-center rounded-l bg-[#2a303d]">
      <Ic w={6} h={22} cls="ml-[5px]"><path d="M1 0v22M5 0v22" stroke="#aaa" strokeWidth="2" strokeDasharray="2 2" /></Ic>
      <button type="button" aria-label="关闭命令行" className="ml-[7px]"><Ic w={12} h={12}><path d="M1 1l10 10M11 1L1 11" stroke="#b8b8b8" strokeWidth="2.500" /></Ic></button>
      <button type="button" aria-label="自定义" className="ml-[14px]"><Ic><path d="M2 18L12 8" stroke="#b8b8b8" strokeWidth="3" strokeLinecap="round" /><path d="M19 5l-4 1-1-4c-3 0-5 3-4 6l2 2c3 1 7-1 7-5z" fill="#b8b8b8" /></Ic></button>
      <label className="ml-[5px] flex h-[32px] flex-1 items-center rounded-sm bg-[#bdbec0] pl-[5px]">
        <Ic w={20} h={16}><path d="M.500.500h19v15H.500z" fill="#a9abae" stroke="#555" /><path d="M0 0h20v4H0z" fill="#555" /><path d="M3 7l3 2-3 2M7 12h4" stroke="#444" /></Ic>
        <span className="ml-[2px]"><ArrL cls="text-[#555]" /></span>
        <input aria-label="命令" placeholder="键入命令" className="ml-[10px] h-full flex-1 bg-transparent text-[16px] italic placeholder:text-[#666]" />
        <Ic w={10} h={5} cls="mr-[6px]"><path d="M0 5h10L5 0z" fill="#555" /></Ic>
      </label>
    </div>
  );
}

/* ---------- dialog ---------- */
const rows: [string, string][] = [
  ["▯8@100/200(4)", "%%1328@100/200(4)"],
  ["4▯25;4▯25", "4%%13225;4%%13225"],
  ["N6▯14", "N6%%13214"],
  ["▯8@100/200(4)", "%%1328@100/200(4)"],
  ["4▯25;6▯25", "4%%13225;6%%13225"],
  ["N6▯12", "N6%%13212"],
  ["▯8@100/200(4)", "%%1328@100/200(4)"],
  ["4▯25;6▯25", "4%%13225;6%%13225"],
  ["N6▯12", "N6%%13212"],
  ["▯8@100/150(2)", "%%1328@100/150(2)"],
  ["3▯16;7▯16 2/5", "3%%13216;7%%13216 2/5"],
];

function Dialog() {
  return (
    <div role="dialog" aria-label="钢筋符号转码" className="absolute top-[148px] left-[848px] flex h-[615px] w-[857px] flex-col overflow-hidden rounded-[8px] bg-white text-black shadow-[0_16px_40px_8px_rgba(0,0,0,0.4)]">
      <div className="flex h-[37px] shrink-0 items-center bg-[#edf4f8] pb-[2px] pl-[10px]">
        <Ic w={18} h={20}><path d="M3 0h15l-1 4L7 15h9l-1 5H0l1-5L11 5H2z" fill="#2b2b2b" /></Ic>
        <span className="ml-[8px]">钢筋符号转码</span>
        <div className="ml-auto flex">
          <button type="button" aria-label="最小化" className="flex w-[58px] justify-center"><Ic w={12} h={12}><path d="M0 6.500h12" stroke="#111" /></Ic></button>
          <button type="button" aria-label="最大化" className="flex w-[58px] justify-center"><Ic w={13} h={13}><rect x=".5" y=".5" width="11" height="11" rx="1" stroke="#111" strokeWidth="1.300" /></Ic></button>
          <button type="button" aria-label="关闭窗口" className="flex w-[60px] justify-center"><Ic w={13} h={13}><path d="M.500.500l12 12M12.500.500l-12 12" stroke="#111" strokeWidth="1.200" /></Ic></button>
        </div>
      </div>
      <div className="flex flex-1 flex-col px-[15px] pt-[13px] pb-[15px]">
        <h2 className="text-[18px] leading-[26px] font-bold">将Unicode钢筋符号统一更改为探索者标准SHX钢筋符号</h2>
        <div className="mt-[8px] flex items-center">
          <button type="button" className="h-[40px] w-[125px] border border-[#707070] bg-[#dddddd]">扫描预览</button>
          <label className="ml-[26px] flex items-center gap-[6px] pb-[1px]">
            <input type="checkbox" className="h-[18px] w-[18px] appearance-none border border-[#707070] bg-white" />
            转码后自动套用探索者字体
          </label>
        </div>
        <p className="mt-[7px] leading-[24px] text-[#666]">发现 274 处可转码文字，确认后点击<span className="font-['Noto_Sans']">“</span>执行转码<span className="font-['Noto_Sans']">”</span>。</p>
        <div className="mt-[6px] flex h-[387px] border border-[#688caf]">
          <table className="h-full flex-1 table-fixed border-collapse text-left">
            <colgroup><col className="w-[88px]" /><col className="w-[358px]" /><col className="w-[358px]" /></colgroup>
            <thead>
              <tr className="h-[29px] bg-linear-to-b from-white to-[#f0f2f4]">
                <th className="border-r border-[#dcdcdc] pl-[6px] font-normal">类型</th>
                <th className="border-r border-[#dcdcdc] pl-[6px] font-normal">原文</th>
                <th className="pl-[6px] font-normal">转码后</th>
              </tr>
            </thead>
            <tbody>
              {rows.map(([from, to], i) => (
                <tr key={i} className={i === 0 ? "bg-[#0078d7] text-white" : "bg-white"}>
                  <td className="border-r border-b border-black pl-[9px]">TEXT</td>
                  <td className={i === 0 ? "border border-black pl-[8px] outline-1 -outline-offset-2 outline-black" : "border-r border-b border-black pl-[8px]"}>{from}</td>
                  <td className="border-r border-b border-black pl-[8px]">{to}</td>
                </tr>
              ))}
            </tbody>
          </table>
          <div className="flex w-[21px] flex-col items-center bg-[#f0f0f0] pt-[37px] pb-[8px]">
            <Ic w={10} h={7}><path d="M1 6l4-5 4 5" stroke="#999" strokeWidth="1.500" /></Ic>
            <span className="mt-[6px] h-[12px] w-full bg-[#cdcdcd]" />
            <Ic w={10} h={7} cls="mt-auto"><path d="M1 1l4 5 4-5" stroke="#999" strokeWidth="1.500" /></Ic>
          </div>
        </div>
        <div className="mt-auto flex justify-end gap-[13px]">
          <button type="button" className="h-[40px] w-[137px] border border-[#707070] bg-[#ffe4a3]">执行转码</button>
          <button type="button" className="h-[40px] w-[112px] border border-[#707070] bg-[#dddddd]">关闭</button>
        </div>
      </div>
    </div>
  );
}

/* ---------- status bar ---------- */
const Grp = ({ children, cls }: Kids & { cls: string }) => <div className={"flex h-[30px] shrink-0 items-center bg-[#3b4453] " + cls}>{children}</div>;
const SB = ({ children, on, label, cls = "w-[28px]" }: Kids & { on?: boolean; label: string; cls?: string }) => (
  <button type="button" aria-label={label} className={"flex h-[28px] items-center justify-center " + cls + (on ? " bg-[#5f8fc4]" : "")}>{children}</button>
);
const ann = "M10 1l3 9 5 7v2l-5-3-3-3-3 3-5 3v-2l5-7z";

function StatusBar() {
  return (
    <footer className="flex h-[39px] items-start border-t border-[#4a4f58] text-[#b9bcc2]">
      <div className="flex h-[23px] pl-[3px]">
        <button type="button" className="w-[74px] bg-[#3b4453] pb-[3px] pl-[13px] font-bold text-white [clip-path:polygon(0_0,100%_0,98%_20%,96%_90%,90%_100%,34%_100%,28%_90%,18%_20%)]">模型</button>
        <button type="button" className="w-[68px] bg-[#2f3744] pb-[3px] pl-[2px] [clip-path:polygon(0_0,100%_0,98%_90%,90%_100%,12%_100%,6%_90%)]">布局1</button>
        <button type="button" className="ml-[1px] w-[68px] bg-[#2f3744] pb-[3px] pl-[2px] [clip-path:polygon(0_0,100%_0,98%_90%,90%_100%,12%_100%,6%_90%)]">布局2</button>
        <button type="button" aria-label="新建布局" className="mt-[2px] ml-[7px] flex h-[20px] w-[26px] items-center justify-center rounded-tl-[12px] rounded-br-[12px] bg-[#2f3744]"><Ic w={10} h={10}><path d="M5 0v10M0 5h10" stroke="#aaa" strokeWidth="2" /></Ic></button>
      </div>
      <div className="mt-px mr-[4px] ml-auto flex gap-[3px] text-white">
        <Grp cls="w-[38px] justify-center"><button type="button" className="text-[15px]">模型</button></Grp>
        <Grp cls="w-[80px] pl-[1px]">
          <SB label="栅格"><Ic><path d="M5.500 0v20M10.500 0v20M15.500 0v20M0 5.500h20M0 10.500h20M0 15.500h20" stroke={G} /></Ic></SB>
          <SB label="捕捉" cls="ml-[2px] w-[28px]"><Ic w={16} h={16}><path d="M1 2h16M1 8h16M1 14h16" stroke={G} strokeWidth="2" strokeDasharray="2 4" /></Ic></SB>
          <span className="ml-[6px]"><ArrL /></span>
        </Grp>
        <Grp cls="w-[130px] pl-[1px]">
          <SB label="正交"><Ic><path d="M.500 0v19.500H20M1 13.500h5.500V19" stroke={G} /></Ic></SB>
          <SB label="极轴" on cls="ml-[2px] w-[28px]"><Ic><circle cx="8" cy="10" r="7.500" stroke="#fff" /><path d="M8 11L17 2M8 10.500h12" stroke="#fff" /></Ic></SB>
          <span className="ml-[5px]"><ArrL /></span>
          <SB label="等轴测" cls="ml-[6px] w-[28px]"><Ic><path d="M2 1l15 18" stroke="#d9506a" strokeWidth="1.500" /><path d="M10 0v20" stroke="#4fbf8f" strokeWidth="1.500" /><circle cx="10" cy="10" r="2" fill="#3b4453" stroke={G} /></Ic></SB>
          <span className="ml-[6px]"><ArrL /></span>
        </Grp>
        <Grp cls="w-[79px]">
          <SB label="对象捕捉追踪" on><Ic><path d="M0 17.500h20M1 17L15 2" stroke="#fff" strokeWidth="1.300" /></Ic></SB>
          <SB label="对象捕捉" on cls="ml-[2px] w-[28px]"><Ic><path d="M3 3.500h15.500V19H3.500V5" stroke="#fff" /><path d="M.500.500h5v5h-5z" fill="#5f8fc4" stroke="#fff" /></Ic></SB>
          <span className="ml-[5px]"><ArrL /></span>
        </Grp>
        <Grp cls="w-[148px] pl-[1px]">
          <SB label="注释可见" on><Ic><path d={ann} fill="#fff" /><circle cx="17" cy="4" r="3" stroke="#fff" /></Ic></SB>
          <SB label="自动缩放" cls="w-[34px]"><Ic><path d={ann} fill={G} /><path d="M18 0l-4 5h3l-2 4 5-5h-3z" fill="#fff" /></Ic></SB>
          <button type="button" className="flex items-center gap-[10px]"><Ic><path d={ann} fill={G} /></Ic><span className="text-[14px]">1:100</span></button>
          <span className="ml-[5px]"><ArrL /></span>
        </Grp>
        <Grp cls="w-[48px] pl-[3px]">
          <SB label="工作空间" cls="w-[24px]"><Ic><g stroke={G} strokeWidth="4"><path d="M10 0v20M0 10h20M3 3l14 14M17 3L3 17" /></g><circle cx="10" cy="10" r="7" fill={G} /><circle cx="10" cy="10" r="3" fill="#3b4453" /></Ic></SB>
          <span className="ml-[7px]"><ArrL /></span>
        </Grp>
        <Grp cls="w-[30px] justify-center"><SB label="注释监视器"><Ic><path d="M10 0v20M0 10h20" stroke={G} strokeWidth="3" /></Ic></SB></Grp>
        <Grp cls="w-[31px] justify-center"><SB label="隔离"><Ic><path d="M.500.500h7v7h-7zM8 12l5 7H3z" stroke={G} /><circle cx="15.500" cy="8" r="4" stroke={G} /></Ic></SB></Grp>
        <Grp cls="w-[68px] justify-between px-[2px]">
          <SB label="系统变量"><Ic s={26}><circle cx="12" cy="11" r="11" fill="#2476b8" /><path d="M0 12h12v10H4l-4-4z" fill={Y} /><path d="M3 0v10M0 5h12" stroke="#fff" strokeWidth="2" /><path d="M10 17l5 6 9-12" stroke="#3fae5a" strokeWidth="4" /></Ic></SB>
          <SB label="图形性能" cls="mr-[4px] w-[28px]"><Ic><path d="M0 0h20v19H0z" fill={G} /><path d="M0 15C5 0 9 0 12 9s5 6 8-2" stroke="#2f8fd8" strokeWidth="1.500" /><path d="M15 8l6 12H9z" fill="#ef8a5a" /><path d="M15 12v4M15 17v2" stroke="#fff" strokeWidth="1.500" /></Ic></SB>
        </Grp>
        <Grp cls="w-[60px] justify-between px-[2px]">
          <SB label="全屏显示"><Ic><path d="M.500 3.500h19v14H.500z" stroke="#d0d0d0" /><path d="M12 9l5-4M8 12l-5 4" stroke={G} /><path d="M17 5h-4l4 4zM3 16v-4l4 4z" fill={G} /></Ic></SB>
          <SB label="自定义"><Ic><path d="M0 3h20M0 10.500h20M0 18h20" stroke={G} strokeWidth="2" /></Ic></SB>
        </Grp>
      </div>
    </footer>
  );
}

/* ---------- taskbar ---------- */
const apps: { name: string; icon: React.ReactNode; run?: boolean }[] = [
  { name: "开始", icon: <Ic s={30}><path d="M0 0h14v14H0z" fill="#8adcfb" /><path d="M15 0h14v14H15z" fill="#52c2f8" /><path d="M0 15h14v14H0z" fill="#45baf7" /><path d="M15 15h14v14H15z" fill="#1aa0f4" /></Ic> },
  { name: "搜索", icon: <Ic s={30}><circle cx="13" cy="12" r="10" fill="#3a3a3a" stroke="#e8e8e8" strokeWidth="3" /><path d="M20 20l7 7" stroke="#e8e8e8" strokeWidth="3" strokeLinecap="round" /></Ic> },
  { name: "Outlook", icon: <Ic s={30}><path d="M15 0l13 9v16a3 3 0 0 1-3 3H6a3 3 0 0 1-3-3V9z" fill="#2a6fe0" /><path d="M15 0l8 5L5 17l-2-1V9z" fill="#7fa4f6" /><path d="M23 5l5 4v6L12 26l-5-6z" fill="#3fb4f5" /><path d="M23 5l5 4v7l-10-4z" fill="#4a3fc8" /><path d="M28 15v10a3 3 0 0 1-3 3H12z" fill="#7fe0fa" /><rect x="0" y="13" width="12" height="13" rx="2" fill="#1560c8" /><ellipse cx="6" cy="19.500" rx="2.800" ry="3.300" stroke="#fff" strokeWidth="1.500" /></Ic> },
  { name: "To Do", icon: <Ic s={30}><path d="M0 14l5-5 8 9-2 9z" fill="#1f5fb8" /><path d="M8 20L24 3l6 1v4L11 27l-3-3z" fill="#3b9cf0" /></Ic> },
  { name: "文件资源管理器", run: true, icon: <Ic s={30}><path d="M0 2h11l3 4h15v6H0z" fill="#e0a010" /><path d="M0 6h30v20a2 2 0 0 1-2 2H2a2 2 0 0 1-2-2z" fill="#ffcf4a" /><path d="M5 22a2 2 0 0 1 2-2h16a2 2 0 0 1 2 2v6H5z" fill="#1272c4" /><path d="M9 24h12" stroke="#0a4f90" strokeWidth="1.500" /></Ic> },
  { name: "游戏", icon: <Ic s={30}><rect x="1" width="28" height="30" rx="5" fill="#262b35" /><path d="M6 7l3 2v9l4 4v3l-7-6zM24 7l-3 2v9l-4 4v3l7-6z" fill="#9aa0a8" /><path d="M15 3l2 6-2 3-2-3zM10 9l5 6 5-6-3 8v8l-2 2-2-2v-8z" fill="#b9bec5" /></Ic> },
  { name: "Everything", icon: <Ic s={30}><circle cx="18" cy="11" r="8.500" stroke="#ff8000" strokeWidth="4" /><path d="M12 18l-9 9" stroke="#ff8000" strokeWidth="4" /></Ic> },
  { name: "N", icon: <Ic s={30}><path d="M4 24V9c0-8 8-8 9 0l4 13c2 7 8 5 8-2V4" stroke="#2f5be8" strokeWidth="3.500" /><path d="M4 24V9c0-6 4-8 7-4" stroke="#4cc9e8" strokeWidth="3" /></Ic> },
  { name: "Microsoft Store", icon: <Ic s={30}><path d="M8 7V1h13v6" stroke="#2cb1f0" strokeWidth="2.500" /><path d="M1 5h28v20a4 4 0 0 1-4 4H5a4 4 0 0 1-4-4z" fill="#fafafa" /><path d="M9 11h5v5H9z" fill="#f25022" /><path d="M16 11h5v5h-5z" fill="#7fba00" /><path d="M9 18h5v5H9z" fill="#00a4ef" /><path d="M16 18h5v5h-5z" fill="#ffb900" /></Ic> },
  { name: "Edge", run: true, icon: <Ic s={30}><circle cx="15" cy="15" r="15" fill="#1a72c8" /><path d="M0 13C2 4 9 0 15 0c9 0 15 6 15 13 0 5-4 7-8 7-5 0-3-2-3-5 0-4-4-7-9-7-6 0-9 3-10 5z" fill="#3cc3e8" /><path d="M17 0c8 1 13 6 13 13 0 5-4 7-8 7-5 0-3-2-3-5 0-4-3-6-4-8z" fill="#5fd76a" /><path d="M10 20c0-5 2-8 5-9-6-3-13 3-12 10 2 5 7 9 13 9-3-1-6-5-6-10z" fill="#0c4a94" /></Ic> },
  { name: "Typora", run: true, icon: <span className="flex h-[30px] items-center"><span className="flex h-[28px] w-[28px] items-center justify-center rounded-[6px] bg-[#f6f6f6] font-['Liberation_Serif'] text-[24px] font-bold text-[#444]">T</span></span> },
  { name: "VS Code", run: true, icon: <Ic s={30}><path d="M22 0l8 3v24l-8 3z" fill="#2aa0e8" /><path d="M22 0v8L4 22l-4-3L22 0z" fill="#1a7cc0" /><path d="M22 30v-8L4 8l-4 3 22 19z" fill="#1f8ad2" /></Ic> },
];

function Taskbar() {
  return (
    <div className="grid h-[60px] shrink-0 grid-cols-[1fr_auto_1fr] bg-[#0a0c0c] text-white">
      <span />
      <div className="flex">
        {apps.map((a) => (
          <button key={a.name} type="button" aria-label={a.name} className="flex w-[55px] flex-col items-center pt-[15px]">
            {a.icon}
            {a.run && <span className="mt-[5px] h-[4px] w-[8px] rounded-full bg-[#999]" />}
          </button>
        ))}
        <button type="button" aria-label="AutoCAD" className="mt-[5px] ml-[4px] flex h-[50px] w-[49px] flex-col items-center rounded-md border border-[#2b2c2c] bg-[#1c1d1d] pt-[9px]">
          <span className="flex h-[30px] w-[30px] items-center justify-center bg-[#fbe9e2]"><Ic s={24} vb="0 0 20 22"><path d="M7 1h5l7 20h-5l-1.500-4.500H6.500L4.500 21H1z" fill="#d2222c" /><path d="M7 1h3L5 19l-.5 2H1z" fill="#8e1b21" /><path d="M9.500 5.500L7.500 13H12z" fill="#fbe9e2" /></Ic></span>
          <span className="mt-[5px] h-[4px] w-[20px] rounded-full bg-[#4cc2ff]" />
        </button>
      </div>
      <div className="flex items-center justify-end pr-[23px]">
        <Ic w={14} h={9}><path d="M1 8l6-6 6 6" stroke="#fff" strokeWidth="2" /></Ic>
        <Ic w={22} h={16} cls="ml-[22px]"><path d="M6 15a5 5 0 0 1-1-10 7 7 0 0 1 12 0 5 5 0 0 1 0 10z" fill="#d0d0d0" /><path d="M4 13L14 3" stroke="#8a8a8a" strokeWidth="2" /></Ic>
        <span className="ml-[22px] text-[14px]">ENG</span>
        <Ic s={22} cls="ml-[20px]"><path d="M13 2H3a2 2 0 0 0-2 2v9a2 2 0 0 0 2 2h11M8 15v5M4 20.500h9M17.500 10v11" stroke="#fff" strokeWidth="1.500" /><path d="M15 1h5v7h-5z" stroke="#fff" strokeWidth="1.500" /></Ic>
        <Ic s={20} cls="ml-[7px]"><path d="M1 7h4l4-4v14l-4-4H1z" stroke="#fff" strokeWidth="1.300" /><path d="M12 7c2 2 2 4 0 6" stroke="#fff" strokeWidth="1.300" /><path d="M15 4c3 4 3 8 0 12" stroke="#666" strokeWidth="1.300" /></Ic>
        <Ic w={26} h={18} cls="ml-[10px]"><rect x="1" y="4" width="21" height="12" rx="3" fill="#9fd7a0" stroke="#fff" strokeWidth="1.500" /><path d="M24 8v4" stroke="#fff" strokeWidth="2" /><path d="M13 0L8 8h4l-1 5 6-7h-4z" fill="#fff" stroke="#0a0c0c" strokeWidth=".7" /></Ic>
        <div className="ml-[20px] text-right text-[14px] leading-[20px]"><div>20:32:47</div><div>2026/9/30</div></div>
      </div>
    </div>
  );
}

export default function App() {
  return (
    <div className="flex h-screen flex-col overflow-hidden bg-[#0a0c0c] font-['Noto_Sans','Noto_Sans_CJK_SC',sans-serif] text-[15px] leading-[20px]">
      <div className="mr-px ml-[2px] flex min-h-0 flex-1 flex-col border border-[#0a93dc] bg-[#222933]">
        <TitleBar />
        <div className="flex h-[24px] items-center border-b border-[#3b4453] pb-[2px] pl-[17px] text-[#b4b6ba]">
          {menus.map(([m, w]) => <button key={m} type="button" className={"shrink-0 text-left whitespace-nowrap " + w}>{m}</button>)}
          <div className="mr-[7px] ml-auto flex items-center gap-[9px]">
            <WinBtn label="最小化图形"><Ic w={9} h={12}><path d="M0 9h9v3H0z" fill={G} /></Ic></WinBtn>
            <WinBtn label="还原图形"><Ic w={15} h={15}><path d="M5.500 4V1.500h9v7H11M1 6.500h9v7H1z" stroke={G} /><path d="M5 0h10v3H5zM0 5h11v3H0z" fill={G} /></Ic></WinBtn>
            <WinBtn label="关闭图形"><Ic w={13} h={13}><path d="M1 1l11 11M12 1L1 12" stroke="#fff" strokeWidth="1.500" /></Ic></WinBtn>
          </div>
        </div>
        <div className="mt-[5px] flex h-[25px] items-stretch gap-[24px] pl-[7px] text-[#b4b6ba]">
          <button type="button" className="-mr-[11px] w-[52px] bg-[#3b4453] pb-[2px] text-white">默认</button>
          {tabs.map((t) => <button key={t} type="button" className="pb-[2px] whitespace-nowrap">{t}</button>)}
          <button type="button" aria-label="功能区显示" className="ml-[14px] flex items-center gap-[6px]">
            <Ic w={19} h={9}><path d="M0 0h19v9H0z" fill="#fff" /><path d="M7 6h5L9.500 3z" fill="#333" /></Ic><Arr />
          </button>
        </div>
        <Ribbon />
        <div className="flex h-[32px] items-end pl-[18px] text-[#b4b6ba]">
          <button type="button" className="h-[28px] w-[176px] bg-[#313947] pl-[25px] text-left [clip-path:polygon(0_100%,4%_94%,10%_12%,13%_0,90%_0,94%_15%,100%_70%,100%_100%)]">开始</button>
          <div className="-ml-[16px] flex h-[28px] w-[316px] items-center bg-[#3b4453] pl-[20px] font-bold text-white [clip-path:polygon(0_100%,2%_70%,5%_10%,7%_0,90%_0,93%_10%,97%_85%,100%_100%)]">
            <span className="whitespace-nowrap">Unicode 私用区钢筋字符测试图纸*</span>
            <button type="button" aria-label="关闭图纸" className="ml-[9px]"><Ic w={11} h={11}><path d="M1 1l9 9M10 1L1 10" stroke="#a9adb5" strokeWidth="2.500" /></Ic></button>
          </div>
          <button type="button" aria-label="新图形" className="mb-[4px] -ml-[11px] flex h-[18px] w-[26px] items-center justify-center rounded-tr-[10px] rounded-bl-[10px] bg-[#313947]"><Ic w={11} h={11}><path d="M5.500 0v11M0 5.500h11" stroke="#a9adb5" strokeWidth="2.500" /></Ic></button>
        </div>
        <div className="mr-[4px] ml-[3px] h-[5px] bg-[#3b4453]" />
        <main className="relative min-h-0 flex-1 bg-[#212830]">
          <Drawing />
          <p className="relative pt-[5px] pl-[6px] text-white">[−][俯视][二维线框]</p>
          <NavBar />
          <CommandLine />
          <Dialog />
        </main>
        <StatusBar />
      </div>
      <Taskbar />
    </div>
  );
}
